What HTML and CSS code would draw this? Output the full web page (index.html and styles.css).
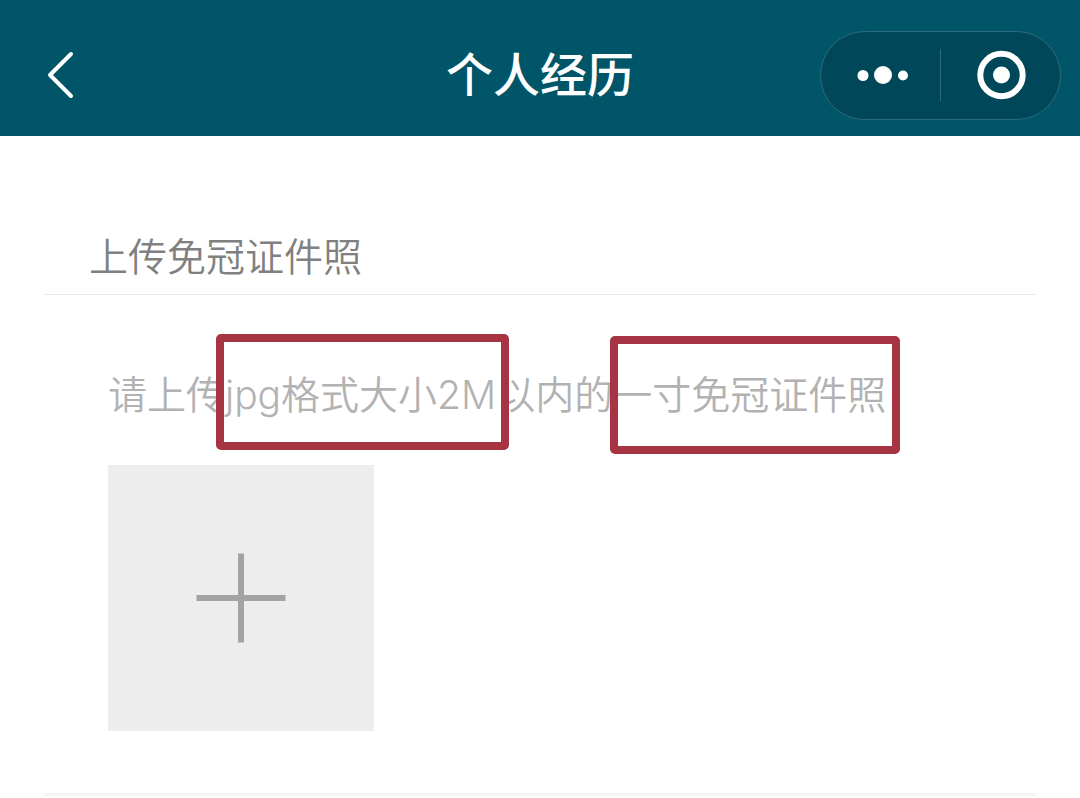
FILE: index.html
```html
<!DOCTYPE html>
<html lang="zh-CN">
<head>
<meta charset="utf-8">
<meta name="viewport" content="width=device-width, initial-scale=1">
<title>个人经历</title>
<link rel="stylesheet" href="styles.css">
</head>
<body>
<header class="navbar">
  <button class="back" type="button" aria-label="返回">
    <svg width="32" height="52" viewBox="0 0 32 52" fill="none" stroke="#fff" stroke-width="4" stroke-linecap="round" stroke-linejoin="round" aria-hidden="true"><path d="M28 5 7 26l21 21"/></svg>
  </button>
  <h1 class="title">个人经历</h1>
  <div class="capsule">
    <button class="capsule-button" type="button" aria-label="更多">
      <svg width="54" height="20" viewBox="0 0 54 20" fill="#fff" aria-hidden="true"><circle cx="9" cy="10.5" r="5.5"/><circle cx="29" cy="10" r="9"/><circle cx="49" cy="10.5" r="5"/></svg>
    </button>
    <span class="divider"></span>
    <button class="capsule-button" type="button" aria-label="关闭">
      <svg width="50" height="50" viewBox="0 0 50 50" aria-hidden="true"><circle cx="25.5" cy="25" r="21.2" fill="none" stroke="#fff" stroke-width="6"/><circle cx="25.5" cy="25" r="8.5" fill="#fff"/></svg>
    </button>
  </div>
</header>
<main class="content">
  <section class="card">
    <h2 class="heading">上传免冠证件照</h2>
    <div class="upload">
      <p class="hint" id="hint">请上传jpg格式大小2M以内的一寸免冠证件照</p>
      <span class="mark mark-format"></span>
      <span class="mark mark-photo"></span>
      <button class="picker" type="button" aria-label="上传照片" aria-describedby="hint">
        <svg width="90" height="90" viewBox="0 0 90 90" stroke="#a3a3a3" stroke-width="6" aria-hidden="true"><path d="M0.5 45h89M45 0.5v89"/></svg>
      </button>
    </div>
  </section>
</main>
</body>
</html>
```
FILE: styles.css
```css
* {
  box-sizing: border-box;
}

body {
  margin: 0;
  background: #fff;
  font-family: Inter, "Noto Sans CJK SC", sans-serif;
}

button {
  display: flex;
  align-items: center;
  justify-content: center;
  margin: 0;
  padding: 0;
  border: 0;
  background: none;
}

.navbar {
  display: grid;
  grid-template-columns: 1fr auto 1fr;
  align-items: center;
  column-gap: 16px;
  padding: 15px 19px 0;
  border-bottom: 1px solid #005668;
  height: 136px;
  background: #005668;
}

.back {
  justify-self: start;
  margin-left: 24px;
}

.title {
  margin: 0;
  color: #fff;
  font-size: 47px;
  font-weight: 500;
  line-height: 64px;
}

.capsule {
  display: flex;
  justify-self: end;
  align-items: center;
  width: 241px;
  height: 89px;
  border: 1px solid #2b6b7b;
  border-radius: 45px;
  background: #00475a;
}

.capsule-button {
  flex: 1;
  height: 100%;
}

.divider {
  width: 1px;
  height: 52px;
  background: #2b6b7b;
}

.content {
  padding: 80px 44px 0;
}

.card {
  border-bottom: 3px solid #f5f5f5;
}

.heading {
  margin: 0;
  padding: 12px 45px 8px;
  border-bottom: 1px solid #e8e8e8;
  color: #808080;
  font-size: 39px;
  font-weight: 350;
  line-height: 58px;
}

.upload {
  position: relative;
  padding: 70px 64px 62px;
}

.hint {
  margin: 0 0 40px;
  color: #b2b2b2;
  font-size: 39px;
  font-weight: 350;
  line-height: 60px;
}

.mark {
  position: absolute;
  border: 8px solid #a63442;
  border-radius: 5px;
}

.mark-format {
  top: 39px;
  left: 172px;
  width: 293px;
  height: 116px;
}

.mark-photo {
  top: 41px;
  left: 566px;
  width: 290px;
  height: 118px;
}

.picker {
  width: 266px;
  height: 266px;
  background: #ededed;
}
```
